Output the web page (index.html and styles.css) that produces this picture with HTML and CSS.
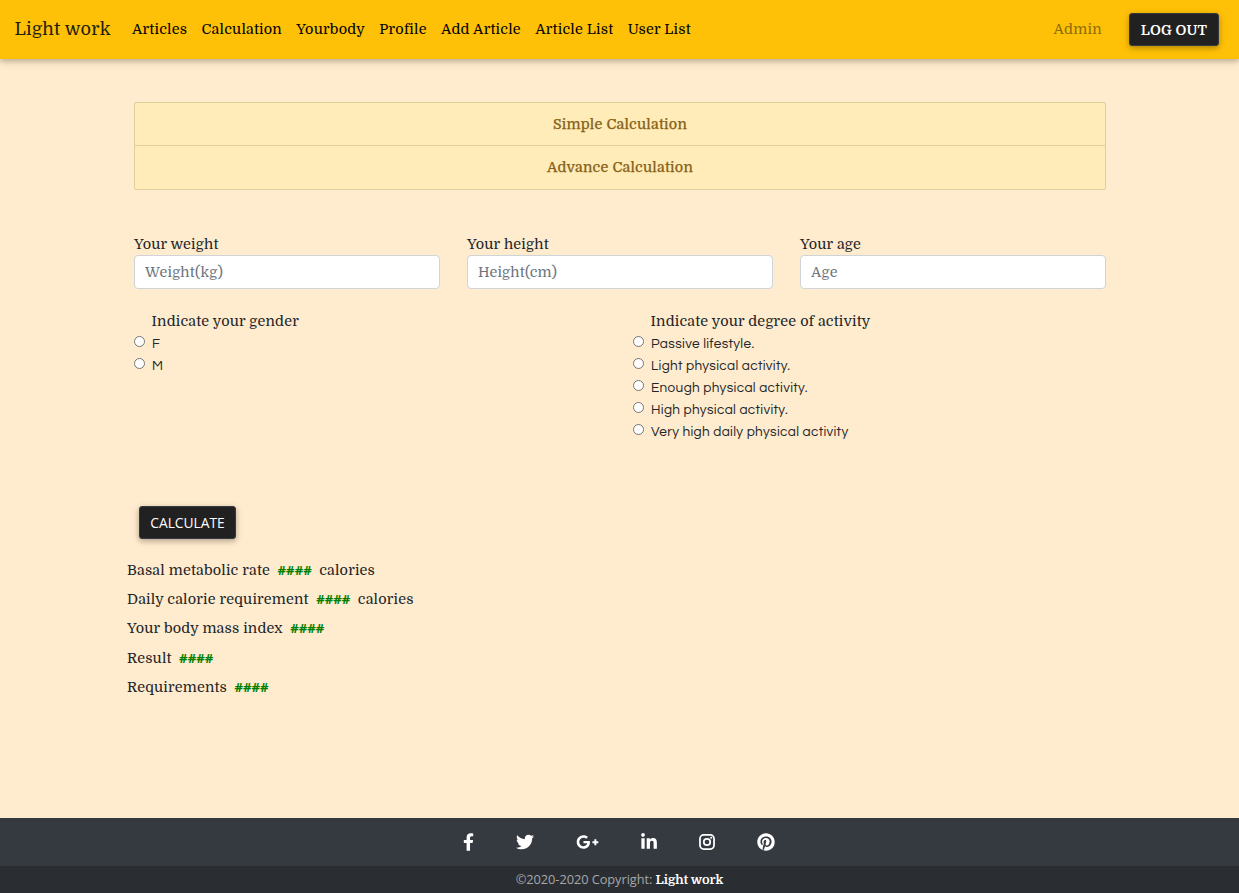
FILE: index.html
```html
<!DOCTYPE html>
<html lang="en">
<head>
<meta charset="utf-8">
<title>Light work</title>
<link rel="stylesheet" href="styles.css">
</head>
<body>
<header class="navbar">
  <a class="brand">Light work</a>
  <nav class="links"><a>Articles</a><a>Calculation</a><a>Yourbody</a><a>Profile</a><a>Add Article</a><a>Article List</a><a>User List</a></nav>
  <span class="user">Admin</span>
  <button class="btn logout">LOG OUT</button>
</header>
<main class="content">
  <div class="modes"><a class="mode">Simple Calculation</a><a class="mode">Advance Calculation</a></div>
  <form class="form">
    <div class="fields">
      <label class="field">Your weight<input class="input" placeholder="Weight(kg)"></label>
      <label class="field">Your height<input class="input" placeholder="Height(cm)"></label>
      <label class="field">Your age<input class="input" placeholder="Age"></label>
    </div>
    <div class="choices">
      <div class="group">
        <div class="group-title">Indicate your gender</div>
        <label class="choice"><input type="radio" name="g" class="radio">F</label>
        <label class="choice"><input type="radio" name="g" class="radio">M</label>
      </div>
      <div class="group">
        <div class="group-title">Indicate your degree of activity</div>
        <label class="choice"><input type="radio" name="a" class="radio">Passive lifestyle.</label>
        <label class="choice"><input type="radio" name="a" class="radio">Light physical activity.</label>
        <label class="choice"><input type="radio" name="a" class="radio">Enough physical activity.</label>
        <label class="choice"><input type="radio" name="a" class="radio">High physical activity.</label>
        <label class="choice"><input type="radio" name="a" class="radio">Very high daily physical activity</label>
      </div>
    </div>
    <button type="button" class="btn calculate">CALCULATE</button>
  </form>
  <div class="results">
    <div class="result"><span>Basal metabolic rate</span><b class="value">####</b><span>calories</span></div>
    <div class="result"><span>Daily calorie requirement</span><b class="value">####</b><span>calories</span></div>
    <div class="result"><span>Your body mass index</span><b class="value">####</b></div>
    <div class="result"><span>Result</span><b class="value">####</b></div>
    <div class="result"><span>Requirements</span><b class="value">####</b></div>
  </div>
</main>
<footer class="footer">
  <div class="social">
    <svg class="icon" width="11" height="18" viewBox="0 0 320 512"><path d="M279.14 288l14.22-92.66h-88.91v-60.13c0-25.35 12.42-50.06 52.24-50.06h40.42V6.26S260.43 0 225.36 0c-73.22 0-121.08 44.38-121.08 124.72v70.62H22.89V288h81.39v224h100.17V288z"/></svg>
    <svg class="icon" width="18" height="18" viewBox="0 0 512 512"><path d="M459.37 151.716c.325 4.548.325 9.097.325 13.645 0 138.72-105.583 298.558-298.558 298.558-59.452 0-114.68-17.219-161.137-47.106 8.447.974 16.568 1.299 25.34 1.299 49.055 0 94.213-16.568 130.274-44.832-46.132-.975-84.792-31.188-98.112-72.772 6.498.974 12.995 1.624 19.818 1.624 9.421 0 18.843-1.3 27.614-3.573-48.081-9.747-84.143-51.98-84.143-102.985v-1.299c13.969 7.797 30.214 12.67 47.431 13.319-28.264-18.843-46.781-51.005-46.781-87.391 0-19.492 5.197-37.36 14.294-52.954 51.655 63.675 129.3 105.258 216.365 109.807-1.624-7.797-2.599-15.918-2.599-24.04 0-57.828 46.782-104.934 104.934-104.934 30.213 0 57.502 12.67 76.67 33.137 23.715-4.548 46.456-13.32 66.599-25.34-7.798 24.366-24.366 44.833-46.132 57.827 21.117-2.273 41.584-8.122 60.426-16.243-14.292 20.791-32.161 39.308-52.628 54.253z"/></svg>
    <svg class="icon" width="23" height="18" viewBox="0 0 640 512"><path d="M386.061 228.496c1.834 9.692 3.143 19.384 3.143 31.956C389.204 370.205 315.599 448 204.8 448c-106.084 0-192-85.915-192-192s85.916-192 192-192c51.864 0 95.083 18.859 128.611 50.292l-52.126 50.03c-14.145-13.621-39.028-29.599-76.485-29.599-65.484 0-118.92 54.221-118.92 121.277 0 67.056 53.436 121.277 118.92 121.277 75.961 0 104.513-54.745 108.965-82.773H204.8v-66.009h181.261zm185.406 6.437V179.2h-56.001v55.733h-55.733v56.001h55.733v55.733h56.001v-55.733H627.2v-56.001h-55.733z"/></svg>
    <svg class="icon" width="16" height="18" viewBox="0 0 448 512"><path d="M100.28 448H7.4V148.9h92.88zM53.79 108.1C24.09 108.1 0 83.5 0 53.8a53.79 53.79 0 0 1 107.58 0c0 29.7-24.1 54.3-53.79 54.3zM447.9 448h-92.68V302.4c0-34.7-.7-79.2-48.29-79.2-48.29 0-55.69 37.7-55.69 76.7V448h-92.78V148.9h89.08v40.8h1.3c12.4-23.5 42.69-48.3 87.88-48.3 94 0 111.28 61.9 111.28 142.3V448z"/></svg>
    <svg class="icon" width="16" height="18" viewBox="0 0 448 512"><rect class="camera" x="24" y="56" width="400" height="400" rx="105"/><circle class="camera" cx="224" cy="256" r="92"/><circle cx="343" cy="136" r="30"/></svg>
    <svg class="icon" width="18" height="18" viewBox="0 0 496 512"><path d="M496 256c0 137-111 248-248 248-25.600 0-50.200-3.900-73.400-11.100 10.100-16.500 25.200-43.500 30.800-65 3-11.600 15.400-59 15.400-59 8.100 15.400 31.700 28.500 56.800 28.500 74.800 0 128.700-68.800 128.700-154.300 0-81.900-66.900-143.200-152.900-143.200-107 0-163.900 71.800-163.900 150.100 0 36.400 19.400 81.700 50.300 96.100 4.700 2.200 7.200 1.200 8.300-3.300.8-3.400 5-20.300 6.900-28.100.6-2.500.3-4.700-1.700-7.100-10.100-12.500-18.300-35.300-18.300-56.600 0-54.700 41.400-107.600 112-107.600 60.900 0 103.600 41.500 103.600 100.900 0 67.100-33.900 113.600-78 113.600-24.300 0-42.600-20.100-36.700-44.800 7-29.500 20.500-61.300 20.500-82.600 0-19-10.200-34.900-31.400-34.900-24.900 0-44.900 25.700-44.900 60.200 0 22 7.400 36.800 7.400 36.800s-24.500 103.800-29 123.200c-5 21.400-3 51.600-.9 71.200C65.400 450.900 0 361.100 0 256 0 119 111 8 248 8s248 111 248 248z"/></svg>
  </div>
  <div class="copyright">©2020-2020 Copyright: <b class="copy-brand">Light work</b></div>
</footer>
</body>
</html>
```
FILE: styles.css
```css
* { box-sizing: border-box; }
body { margin: 0; height: 893px; display: flex; flex-direction: column; background: #ffebcd; color: #212529; font: 14.4px/22px Domine, "Noto Serif", "DejaVu Serif Condensed", "DejaVu Serif", serif; letter-spacing: .18px; }
.navbar { height: 59px; flex: none; display: flex; align-items: center; padding: 0 20px 0 14.500px; background: #ffc107; box-shadow: 0 2px 5px rgba(0,0,0,.2), 0 2px 10px rgba(0,0,0,.12); white-space: nowrap; }
.brand { font-size: 18px; width: 117.500px; color: #241f0b; padding-bottom: 2px; letter-spacing: .25px; }
.links { display: flex; gap: 14.400px; flex: 1; color: #000; padding-bottom: 2px; letter-spacing: .2px; }
.user { color: #8d6c09; margin-right: 27px; padding-bottom: 2px; letter-spacing: .3px; }
.btn { height: 33px; padding: 0; border: 1px solid #343a40; border-radius: 3px; background: #212121; color: #fff; box-shadow: 0 2px 5px rgba(0,0,0,.2), 0 2px 8px rgba(0,0,0,.14); }
.logout { width: 90px; font: bold 14px Domine, "Noto Serif", "DejaVu Serif Condensed", serif; letter-spacing: .2px; }
.content { flex: 1; width: 972px; margin: 0 133px 0 134px; padding-top: 43px; }
.modes { border: 1px solid #dfcf9c; border-radius: 2px; background: #ffecb8; color: #856117; text-align: center; letter-spacing: .22px; }
.mode { display: block; height: 42px; line-height: 42px; -webkit-text-stroke: .25px; }
.mode + .mode { height: 44px; border-top: 1px solid #dfcf9c; }
.fields { display: grid; grid-template-columns: repeat(3, 306px); gap: 27px; margin-top: 43px; }
.field { display: block; }
.input { display: block; width: 306px; height: 34px; border: 1px solid #ced4da; border-radius: 4px; padding: 0 10px; font: inherit; letter-spacing: inherit; background: #fff; }
.input::placeholder { color: #6c757d; }
.choices { display: grid; grid-template-columns: 499px 1fr; margin-top: 21px; height: 196px; }
.group-title { padding-left: 17.500px; }
.choice { display: flex; height: 22px; font: 13.6px/24px Questrial, Lato, sans-serif; letter-spacing: .33px; }
.radio { appearance: none; width: 11px; height: 11px; border: 1px solid #767676; border-radius: 50%; background: #fff; margin: 4px 7px 0 0; }
.calculate { display: block; width: 97px; margin-left: 5px; font: 13.800px "Open Sans", "Noto Sans", sans-serif; }
.results { margin: 20px 0 0 -7px; }
.result { display: flex; gap: 7.500px; height: 29.200px; }
.value { color: #008000; font: bold 13.200px/22px "Open Sans", "Noto Sans", sans-serif; letter-spacing: 0; }
.footer { flex: none; background: #343a40; }
.social { height: 48px; display: flex; align-items: center; justify-content: center; gap: 42px; padding-right: 1px; }
.icon { fill: #fff; display: block; }
.camera { fill: none; stroke: #fff; stroke-width: 50px; }
.copyright { height: 27px; background: #2a2e33; color: #a5a7a9; text-align: center; font: 12.800px/27px "Open Sans", "Noto Sans", sans-serif; letter-spacing: -.06px; }
.copy-brand { color: #fff; font-family: Domine, "Noto Serif", "DejaVu Serif Condensed", serif; }
```
